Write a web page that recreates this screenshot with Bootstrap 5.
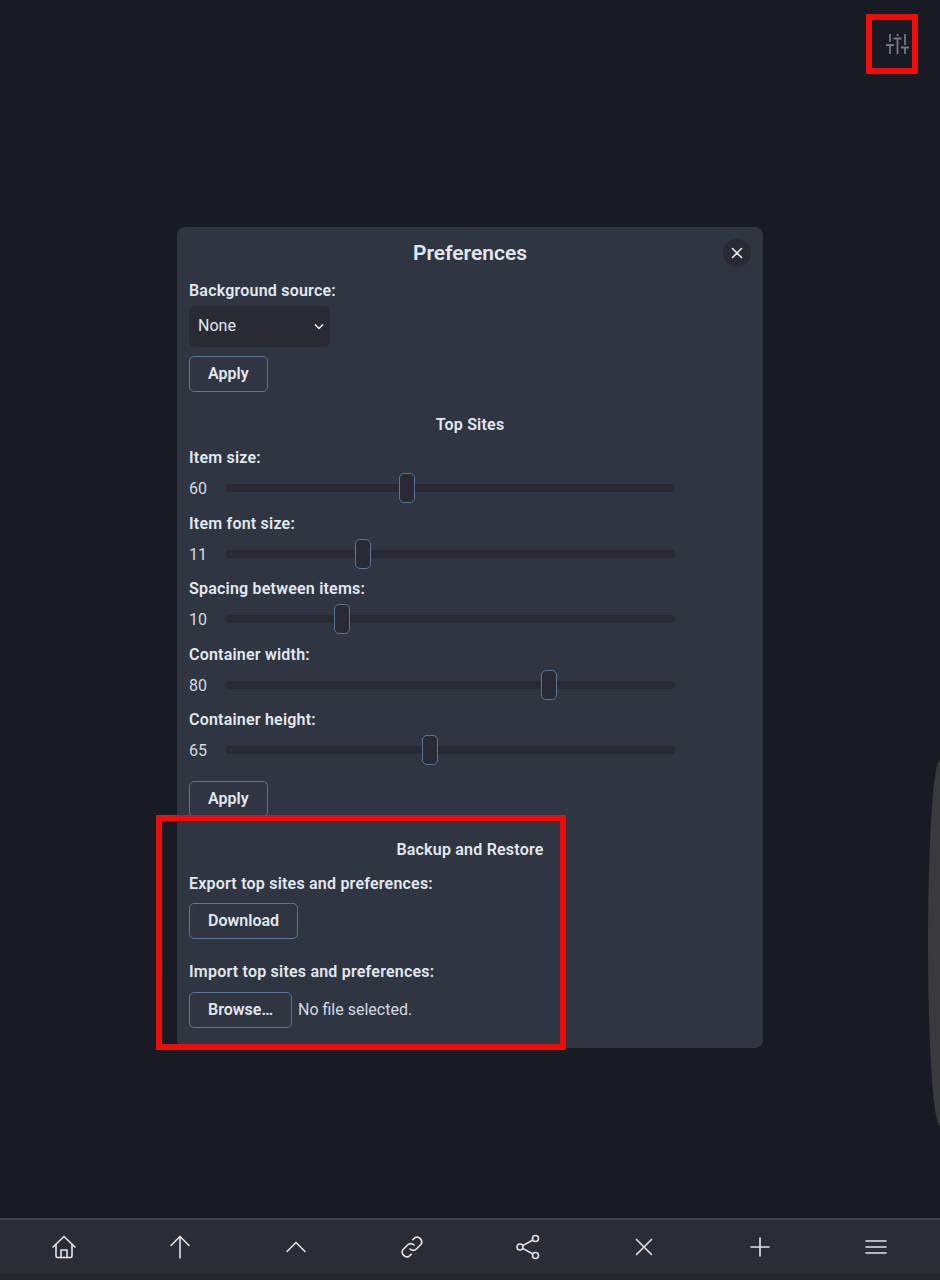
<!DOCTYPE html>
<html lang="en">
<head>
  <meta charset="UTF-8">
  <meta name="viewport" content="width=device-width, initial-scale=1.0">
  <title>Preferences</title>
  <link href="https://cdn.jsdelivr.net/npm/bootstrap@5.3.0/dist/css/bootstrap.min.css" rel="stylesheet">
  <style>
    html, body { height: 100%; }
    body { background: #181b23; color: #e2e8f0; font-family: Roboto, "Liberation Sans", sans-serif; font-size: 16px; overflow: hidden; }
    .page-wrap { height: 1280px; display: flex; flex-direction: column; }
    .page-main { flex: 1; padding-top: 227px; }
    .pref-panel { width: 586px; height: 821px; margin: 0 auto; background: #2f3541; border-radius: 8px; padding: 12px; position: relative; }
    .pref-title { font-size: 21px; font-weight: 600; line-height: 28px; margin: 0; text-align: center; }
    .pref-close { position: absolute; top: 12px; right: 12px; width: 28px; height: 28px; border-radius: 50%; background: #292a33; border: 0; padding: 0; color: #e2e8f0; }
    .pref-label { display: block; font-weight: 600; line-height: 22px; margin: 0; letter-spacing: .21px; }
    .pref-head { font-weight: 600; line-height: 22px; text-align: center; margin: 0; letter-spacing: .21px; }
    .pref-select { width: 141px; height: 41px; background-color: #292a33; color: #e2e8f0; border: 0; border-radius: 6px; padding: 0 9px 2px; font-size: 16px;
      background-image: url("data:image/svg+xml,%3csvg xmlns='http://www.w3.org/2000/svg' viewBox='0 0 16 16'%3e%3cpath fill='none' stroke='%23e2e8f0' stroke-linecap='round' stroke-linejoin='round' stroke-width='2' d='m3 5 5 5 5-5'/%3e%3c/svg%3e");
      background-size: 12px 12px; background-position: right 5px center; }
    .pref-btn { display: block; height: 36px; padding: 0 18px; background: transparent; color: #e2e8f0; font-weight: 600; font-size: 16px; border: 1px solid #5b7497; border-radius: 5px; line-height: 34px; }
    .pref-btn:hover { background: transparent; color: #e2e8f0; border-color: #5b7497; }
    .slide-row { display: flex; align-items: center; height: 30px; }
    .slide-num { width: 36px; flex: none; font-size: 16px; color: #d5dae3; padding-top: 2px; }
    .slide-input { width: 450px; height: 30px; display: block; background: transparent; -webkit-appearance: none; appearance: none; margin: 0; }
    .slide-input::-webkit-slider-runnable-track { height: 8px; background: #292a33; border-radius: 4px; }
    .slide-input::-webkit-slider-thumb { -webkit-appearance: none; appearance: none; width: 16px; height: 30px; margin-top: -11px; background: #292a33; border: 1px solid #5b7497; border-radius: 5px; }
    .file-note { color: #d5dae3; }
    .foot-bar { height: 62px; background: linear-gradient(#41434c 0 2px, #2b2c35 2px 56px, #25262b 56px); padding: 2px 6px 6px; display: flex; }
    .foot-item { width: 116px; display: flex; align-items: center; justify-content: center; color: #e4e5ea; background: none; border: 0; padding: 0; }
    .foot-item svg { display: block; }
    .sliders-icon { position: absolute; left: 884px; top: 32px; color: #77787c; }
    .mark-box { position: absolute; border: 6px solid #ee0d0d; pointer-events: none; }
    .mark-top { left: 866px; top: 14px; width: 52px; height: 60px; }
    .mark-bottom { left: 156px; top: 815px; width: 410px; height: 235px; }
    .edge-shape { position: absolute; left: 928px; top: 760px; width: 12px; height: 366px; border-radius: 100% 0 0 100% / 50% 0 0 50%; background: #3a3a3c; }
  </style>
</head>
<body>

<div class="edge-shape"></div>

<div class="page-wrap">
  <div class="page-main">
    <div class="pref-panel">
      <h1 class="pref-title">Preferences</h1>
      <button class="pref-close" type="button" aria-label="Close">
        <svg width="28" height="28" viewBox="0 0 28 28" fill="none" stroke="currentColor" stroke-width="1.6" stroke-linecap="round"><path d="M9.5 9.500l9 9M18.500 9.500l-9 9"/></svg>
      </button>

      <label class="pref-label" style="margin-top:13px">Background source:</label>
      <select class="form-select pref-select" style="margin-top:4px"><option>None</option></select>
      <button class="btn pref-btn" type="button" style="margin-top:9px">Apply</button>

      <h2 class="pref-head fs-6" style="margin-top:22px">Top Sites</h2>

      <label class="pref-label" style="margin-top:11px">Item size:</label>
      <div class="slide-row" style="margin-top:4px"><span class="slide-num">60</span><input class="slide-input" type="range" min="0" max="150" value="60"></div>
      <label class="pref-label" style="margin-top:10px">Item font size:</label>
      <div class="slide-row" style="margin-top:4px"><span class="slide-num">11</span><input class="slide-input" type="range" min="5" max="25" value="11"></div>
      <label class="pref-label" style="margin-top:9px">Spacing between items:</label>
      <div class="slide-row" style="margin-top:4px"><span class="slide-num">10</span><input class="slide-input" type="range" min="0" max="40" value="10"></div>
      <label class="pref-label" style="margin-top:10px">Container width:</label>
      <div class="slide-row" style="margin-top:4px"><span class="slide-num">80</span><input class="slide-input" type="range" min="0" max="110" value="80"></div>
      <label class="pref-label" style="margin-top:9px">Container height:</label>
      <div class="slide-row" style="margin-top:4px"><span class="slide-num">65</span><input class="slide-input" type="range" min="15" max="125" value="65"></div>

      <button class="btn pref-btn" type="button" style="margin-top:16px">Apply</button>

      <h2 class="pref-head fs-6" style="margin-top:22px">Backup and Restore</h2>
      <label class="pref-label" style="margin-top:12px">Export top sites and preferences:</label>
      <button class="btn pref-btn" type="button" style="margin-top:8px">Download</button>
      <label class="pref-label" style="margin-top:22px">Import top sites and preferences:</label>
      <div class="d-flex align-items-center gap-2" style="margin-top:9px">
        <button class="btn pref-btn" type="button">Browse…</button>
        <span class="file-note" style="margin-left:-2px">No file selected.</span>
      </div>
    </div>
  </div>

  <div class="foot-bar">
    <button class="foot-item" type="button" aria-label="Home">
      <svg width="26" height="26" viewBox="0 0 26 26" fill="none" stroke="currentColor" stroke-width="1.6" stroke-linecap="round" stroke-linejoin="round"><path d="M2 13L13 2.500 24 13"/><path d="M5 10.500V22a1.500 1.500 0 0 0 1.500 1.500h13A1.500 1.500 0 0 0 21 22V10.500"/><path d="M10 23.500V16h6v7.500"/></svg>
    </button>
    <button class="foot-item" type="button" aria-label="Top">
      <svg width="24" height="26" viewBox="0 0 24 26" fill="none" stroke="currentColor" stroke-width="1.6" stroke-linecap="round" stroke-linejoin="round"><path d="M12 2.500V24"/><path d="M3 11.500L12 2.500l9 9"/></svg>
    </button>
    <button class="foot-item" type="button" aria-label="Up">
      <svg width="22" height="14" viewBox="0 0 22 14" fill="none" stroke="currentColor" stroke-width="1.6" stroke-linecap="round" stroke-linejoin="round"><path d="M2 11.500L11 2.500l9 9"/></svg>
    </button>
    <button class="foot-item" type="button" aria-label="Link">
      <svg width="26" height="26" viewBox="0 0 26 26" fill="none" stroke="currentColor" stroke-width="1.6" stroke-linecap="round" stroke-linejoin="round"><path d="M11 15a4.500 4.500 0 0 0 6.400 0l5-5A4.900 4.900 0 0 0 16 3.600l-2.200 2.200"/><path d="M15 11a4.500 4.500 0 0 0-6.400 0l-5 5A4.900 4.900 0 0 0 10 22.400l2.200-2.200"/></svg>
    </button>
    <button class="foot-item" type="button" aria-label="Share">
      <svg width="26" height="26" viewBox="0 0 26 26" fill="none" stroke="currentColor" stroke-width="1.6"><circle cx="20.500" cy="4.500" r="3"/><circle cx="5" cy="13" r="3"/><circle cx="20.500" cy="21.500" r="3"/><path d="M18 6L7.600 11.600M7.600 14.400L18 20"/></svg>
    </button>
    <button class="foot-item" type="button" aria-label="Close tab">
      <svg width="20" height="20" viewBox="0 0 20 20" fill="none" stroke="currentColor" stroke-width="1.6" stroke-linecap="round"><path d="M2.500 2.500l15 15M17.500 2.500l-15 15"/></svg>
    </button>
    <button class="foot-item" type="button" aria-label="New tab">
      <svg width="20" height="20" viewBox="0 0 20 20" fill="none" stroke="currentColor" stroke-width="1.6" stroke-linecap="round"><path d="M10 1v18M1 10h18"/></svg>
    </button>
    <button class="foot-item" type="button" aria-label="Menu">
      <svg width="22" height="16" viewBox="0 0 22 16" fill="none" stroke="currentColor" stroke-width="1.6" stroke-linecap="round"><path d="M1 2h20M1 8h20M1 14h20"/></svg>
    </button>
  </div>
</div>

<svg class="sliders-icon" width="26" height="24" viewBox="0 0 26 24" fill="none" stroke="currentColor" stroke-width="1.8"><path d="M6 2v8M6 13v9M13.500 2v2M13.500 6.500V22M21 2v11M21 15.500V22M2 13h8M9.500 6.500h8M17 15.500h8"/></svg>

<div class="mark-box mark-top"></div>
<div class="mark-box mark-bottom"></div>

<script src="https://cdn.jsdelivr.net/npm/bootstrap@5.3.0/dist/js/bootstrap.bundle.min.js"></script>
</body>
</html>
